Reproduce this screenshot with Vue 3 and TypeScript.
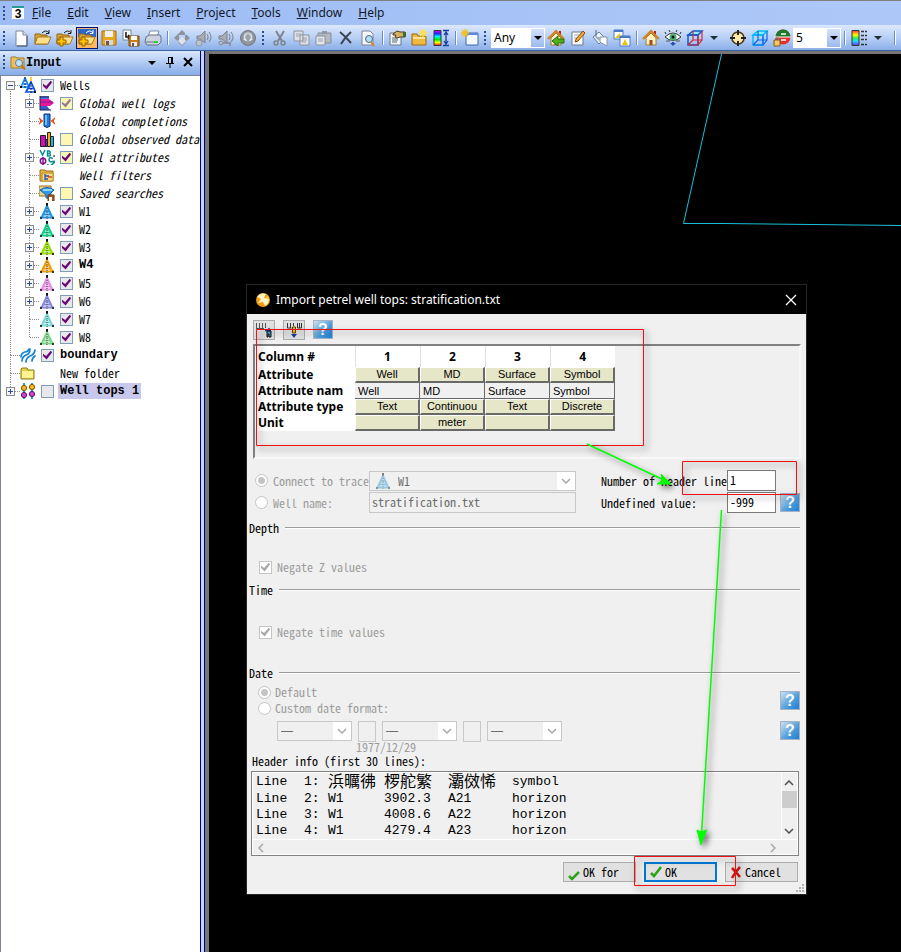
<script setup lang="ts">
import { ref } from 'vue'

interface ToolItem {
  kind: 'icon' | 'sep' | 'grip' | 'caret' | 'select'
  name?: string
  value?: string
  on?: boolean
}

interface TreeRow {
  label: string
  level: 0 | 1
  icon: string
  color?: string
  expander?: '+' | '-'
  last?: boolean
  check?: 'on' | 'off' | 'none'
  yellow?: boolean
  faded?: boolean
  italic?: boolean
  bold?: boolean
  selected?: boolean
}

const menus = ['File', 'Edit', 'View', 'Insert', 'Project', 'Tools', 'Window', 'Help']

const folder =
  '<path d="M1 5h5l1 1h6v9H1z" fill="#e0a030" stroke="#8a6418"/><path d="M3.500 8H17l-3 7H1z" fill="#ffe08a" stroke="#a87820"/>'
const importArrow = (color: string) => `<path d="M8 4q4-4 7 0M15 1v3.500h-3" fill="none" stroke="${color}"/>`
const plus = '<path d="M4 8h3v3h3v3H7v3H4v-3H1v-3h3z" fill="#ffc400" stroke="#9a6400"/>'
const floppy =
  '<path d="M2 2h14v14H2z" fill="#e8a81c" stroke="#a86c10"/><path d="M5 2h8v6H5z" fill="#eef2f8"/><path d="M5 11h8v5H5z" fill="#d8d8dc"/><path d="M6 12h3v4H6z" fill="#6c5a3c"/>'
const house =
  '<path d="M12 2h2v5h-2z" fill="#c02010"/><path d="M4 9l5-5 5 5v7H4z" fill="#fff3c0" stroke="#a07830"/><path d="M1 10l8-8 8 8" fill="none" stroke="#d08020" stroke-width="2"/><path d="M7.500 11h3v5h-3z" fill="#a04818"/>'
const cube = (a: string, b: string) =>
  `<path d="M2 6l5-4h9l-4 4z" fill="#8ef" stroke="${a}" stroke-width="1.500"/><path d="M2 6h10v10H2z" fill="none" stroke="${a}" stroke-width="1.500"/><path d="M12 16l4-5V2M7 2v9h9M2 16l5-5M2 16h10V6" fill="none" stroke="${b}" stroke-width="1.200"/>`
const speaker =
  '<path d="M2 7h3l5-5v12l-5-4H2z" fill="#a8adb5" stroke="#7b8089"/><path d="M12 5q2 3 0 6M14 3q4 5 0 10" fill="none" stroke="#888e98" stroke-width="1.200"/>'
const shades =
  '<defs><linearGradient id="rainbow" x2="0" y2="1"><stop offset="0" stop-color="#f0f"/><stop offset=".2" stop-color="#22f"/><stop offset=".4" stop-color="#0ef"/><stop offset=".6" stop-color="#0e0"/><stop offset=".8" stop-color="#ff0"/><stop offset="1" stop-color="#f00"/></linearGradient><linearGradient id="legend" x2="0" y2="1"><stop offset="0" stop-color="#f33"/><stop offset=".3" stop-color="#ff0"/><stop offset=".5" stop-color="#3e4"/><stop offset=".7" stop-color="#2df"/><stop offset="1" stop-color="#63d"/></linearGradient></defs>'

const toolIcons: Record<string, string> = {
  New: '<path d="M4 2h7l4 4v11H4z" fill="#fff" stroke="#7a869a"/><path d="M11 2v4h4" fill="#dde4ee" stroke="#7a869a"/><path d="M15 7v10H5" fill="none" stroke="#445068"/>',
  Open: folder + importArrow('#222'),
  'Import file': folder + importArrow('#222') + plus,
  'Import on selection': '<path d="M0 0h18v8H0z" fill="#2c68c8"/>' + folder + importArrow('#fff') + plus,
  Save: floppy,
  'Save as':
    '<path d="M1 1h8v10H1z" fill="#fff" stroke="#789"/><path d="M4 3v5h4M6 6l2 2-2 2" fill="none" stroke="#111" stroke-width="1.500"/><path d="M7 7h10v10H7z" fill="#c8801c" stroke="#7c4408"/><path d="M9 7h6v4H9z" fill="#fff"/><path d="M9 13h6v4H9z" fill="#eee"/><path d="M10 14h2v3h-2z" fill="#555"/>',
  Print:
    '<path d="M6 2h9l-2 6H4z" fill="#fff" stroke="#8090a8"/><path d="M2 8l3-2h11l1 2v5l-3 3H3l-2-3z" fill="#cdd4de" stroke="#66728a"/><path d="M2 13h12" stroke="#66728a"/><path d="M10 12h4v2h-4z" fill="#3c3"/>',
  Move: '<path d="M9 1l5 5H4zM1 9l5-5v9zM17 9l-5-5v9z" fill="#8d929b"/><path d="M9 17l4-4H5z" fill="#8d929b"/><path d="M9 8l4 4-4 4-4-4z" fill="#dde2ea"/>',
  'Play sound': speaker + '<circle cx="4" cy="14" r="3" fill="#bfc4cc" stroke="#92979f"/>',
  'Sound key': speaker + '<circle cx="4" cy="14" r="2" fill="none" stroke="#888"/><path d="M6 14h7v3" fill="none" stroke="#888" stroke-width="1.500"/>',
  Stop: '<circle cx="9" cy="9" r="7.500" fill="#8f949c" stroke="#737881"/><circle cx="9" cy="8" r="4.500" fill="#d8dce2"/><path d="M9 4l3 4-3 6-3-6z" fill="#9ca2ac"/><path d="M4 10h3v2zM14 10h-3v2z" fill="#eee"/>',
  Cut: '<path d="M5 2l6 10M13 2L7 12" stroke="#7e848e" stroke-width="2"/><circle cx="5" cy="14" r="2" fill="none" stroke="#7e848e" stroke-width="1.500"/><circle cx="12" cy="14" r="2" fill="none" stroke="#7e848e" stroke-width="1.500"/>',
  Copy: '<path d="M1 2h9v10H1zM7 6h9v10H7z" fill="#dfe3e9" stroke="#8b919b"/><path d="M3 5h5M3 7h3M9 9h5M9 11h5M9 13h4" stroke="#9aa0aa"/>',
  Paste:
    '<path d="M3 4h13v10H3z" fill="#b3b8c0" stroke="#868c96"/><path d="M7 2h5v3H7z" fill="#9298a2"/><path d="M1 7h9v9H1z" fill="#e2e5ea" stroke="#8b919b"/><path d="M3 10h5M3 12h5" stroke="#9aa0aa"/>',
  Delete: '<path d="M3 3q5 4 11 11M14 3Q8 8 4 15" fill="none" stroke="#3d4654" stroke-width="2"/>',
  Preview:
    '<path d="M3 2h8l3 3v11H3z" fill="#f4f6fa" stroke="#7a869a"/><circle cx="10" cy="10" r="3.500" fill="#aee0f6" stroke="#567"/><path d="M12 13l3 4" stroke="#d08a20" stroke-width="2"/>',
  Properties:
    '<path d="M2 4h11v12H2z" fill="#f2f4f8" stroke="#68788c"/><path d="M4 9h6M4 11h6M4 13h5" stroke="#567"/><path d="M5 5l4-3 3 1h5v5h-5L9 9 7 8l1-2H5z" fill="#d8b060" stroke="#4a3a18"/><path d="M15 3h3v5h-3z" fill="#3c6c34"/>',
  'New folder':
    '<path d="M2 5h5l1 2h8v9H2z" fill="#f0b83c" stroke="#96691c"/><path d="M3 8h12v2H3z" fill="#ffe49c"/><path d="M13 0v8M9 4h8M10 1l6 6M16 1l-6 6" stroke="#ffe14a" stroke-width="1.300"/>',
  'Color scale':
    shades +
    '<path d="M2 1.500h7v15H2z" fill="url(#rainbow)" stroke="#334"/><path d="M14 3v12M11 1.500h6M11 16.500h6M12 6l2-3 2 3M12 12l2 3 2-3" fill="none" stroke="#1a3fa0" stroke-width="1.300"/>',
  'New window':
    '<path d="M5 4h12v12H5z" fill="#f4f8ff" stroke="#3f66b0"/><path d="M5 4h12v2H5z" fill="#5b8ae0"/><path d="M4 0v8M0 4h8M1 1l6 6M7 1L1 7" stroke="#f4c01c" stroke-width="1.300"/>',
  'Home back': house + '<path d="M17 10h-6V7l-6 5 6 5v-3h6z" fill="#4fae1c" stroke="#24700c"/>',
  'Edit sheet':
    '<path d="M3 3h11v13H3z" fill="#fafcff" stroke="#6c7a90"/><path d="M5 6h5M5 9h4" stroke="#9ab"/><path d="M14 2l2 2-7 8-3 1 1-3z" fill="#f0a830" stroke="#8a4a10"/>',
  Fill: '<path d="M2 8l6-5 6 6-6 6z" fill="#eef3fa" stroke="#667c98"/><path d="M5 1v7" stroke="#567"/><path d="M9 8h7v9l-7-4z" fill="#fff" stroke="#8899aa"/><path d="M4 8h7l-3 4z" fill="#9cb0c8"/>',
  'Copy view':
    '<path d="M1 1h9v9H1z" fill="#fff" stroke="#4a78c8"/><path d="M1 1h9v2H1z" fill="#4a78c8"/><path d="M2 9h5V4z" fill="#e8c800"/><path d="M7 7h10v10H7z" fill="#fff" stroke="#4a78c8"/><path d="M7 7h10v2H7z" fill="#4a78c8"/><path d="M9 16h6l-3-6z" fill="#e8c800"/>',
  Home: house,
  'View all':
    '<path d="M1 8q8-8 16 0-8 7-16 0z" fill="#fff" stroke="#333"/><circle cx="9" cy="8" r="3.500" fill="#4cb070"/><circle cx="9" cy="8" r="1.500" fill="#111"/><path d="M2 5L1 3M6 3L5 1M12 3l1-2M16 5l1-2" stroke="#333"/><path d="M8 13v1H6l3 3 3-3h-2v-1z" fill="#2c4fb4"/><path d="M2 12h4M12 12h4" stroke="#555"/>',
  Cube: cube('#1658c8', '#d02838'),
  Target:
    '<circle cx="9" cy="9" r="6" fill="#ffe9a8" stroke="#4a3410" stroke-width="1.500"/><path d="M9 1v5M9 12v5M1 9h5M12 9h5" stroke="#222" stroke-width="2"/>',
  'Cyan cube': cube('#08b8ff', '#0868e8'),
  'Lock view':
    '<circle cx="10" cy="8" r="7.500" fill="#e83030"/><path d="M2.500 8a7.500 7.500 0 0115 0z" fill="#1c7a2c"/><path d="M1 8h17" stroke="#fff"/><path d="M8 5h5M8 11h5" stroke="#fff" stroke-width="1.500"/><path d="M1 11h6v6H1z" fill="#f4c860" stroke="#7a5a18"/><path d="M2.500 11V9h3v2" fill="none" stroke="#777"/>',
  Legend:
    '<path d="M2 1.500h7v15H2z" fill="url(#legend)" stroke="#334"/><path d="M11 2.500h6M11 6.500h6M11 10.500h6M11 15.500h6" stroke="#333" stroke-width="1.500" stroke-dasharray="3 1"/>',
}

const icon = (name: string, on = false): ToolItem => ({ kind: 'icon', name, on })
const sep: ToolItem = { kind: 'sep' }
const grip: ToolItem = { kind: 'grip' }
const tools: ToolItem[] = [
  grip,
  icon('New'), icon('Open'), icon('Import file'), icon('Import on selection', true), icon('Save'), icon('Save as'), icon('Print'),
  sep,
  icon('Move'), icon('Play sound'), icon('Sound key'), icon('Stop'),
  grip,
  icon('Cut'), icon('Copy'), icon('Paste'), icon('Delete'), icon('Preview'),
  sep,
  icon('Properties'), icon('New folder'), icon('Color scale'),
  sep,
  icon('New window'),
  grip,
  { kind: 'select', name: 'Domain', value: 'Any' },
  icon('Home back'), icon('Edit sheet'), icon('Fill'), icon('Copy view'),
  sep,
  icon('Home'), icon('View all'), icon('Cube'),
  { kind: 'caret', name: 'Cube options' },
  icon('Target'), icon('Cyan cube'), icon('Lock view'),
  { kind: 'select', name: 'Vertical scale', value: '5' },
  sep,
  icon('Legend'),
  { kind: 'caret', name: 'Legend options' },
  sep,
]

const rig =
  '<path d="M8 0v4" stroke="#111" stroke-width="2"/><path d="M8 3L2.500 15M8 3l5.500 12M6 8.500h4M4.500 11.500h7M1 14.500h14" fill="none" stroke="currentColor" stroke-width="2"/><path d="M8 5v11" stroke="#444" stroke-dasharray="1 1"/><path d="M1 15h2M13 15h2" stroke="#333" stroke-width="2"/>'

const treeIcons: Record<string, string> = {
  rig,
  wells:
    '<path d="M5 1L1 10h8zM2.500 7h5" fill="none" stroke="#0a8cf8" stroke-width="1.700"/><path d="M11 5L6 15h9.500zM8.500 11.500h5" fill="none" stroke="#0a50e8" stroke-width="1.700"/><path d="M11 0v4" stroke="#fc3" stroke-width="2"/><path d="M5 0v11M11 5v11" stroke="#123" stroke-dasharray="2 1"/><path d="M0 10h2M14 15h2" stroke="#111" stroke-width="2"/>',
  logs: '<path d="M1 1h9v3H1z" fill="#4c78e8"/><path d="M1 4h9l5 4-4 3H1z" fill="#e8189c"/><path d="M1 7h13" stroke="#7c1c9c"/><path d="M1 11h7l3 4H1z" fill="#3c58c8"/><path d="M1 1v14M1 2h9M1 15h11" stroke="#224"/>',
  completions:
    '<path d="M5 1h6v12q-3 3-6 0z" fill="#1e7ce8" stroke="#12306c"/><path d="M7 2v10" stroke="#8cd0ff" stroke-width="1.500"/><path d="M0 5l3 3-3 3M16 5l-3 3 3 3M1 8h3M15 8h-3" fill="none" stroke="#f04c10" stroke-width="1.500"/>',
  observed:
    '<path d="M1.500 4.500h5v11h-5z" fill="#d010b0" stroke="#222"/><path d="M6.500 8.500h3v7h-3z" fill="#5030c8" stroke="#222"/><path d="M8.500 1.500h3v14h-3z" fill="#f8a818" stroke="#222"/><path d="M11.500 5.500h3v10h-3z" fill="#18b8f0" stroke="#222"/>',
  attributes:
    '<path d="M1 1l2.500 5L6 1M8.500 2v5h2q2-1 0-2.500h-2 2q1.500-1.500 0-2.500z" fill="none" stroke="#0a8c94" stroke-width="1.500"/><circle cx="4" cy="12" r="2.700" fill="none" stroke="#7c1088" stroke-width="1.500"/><path d="M4 8v8" stroke="#7c1088" stroke-width="1.500"/><path d="M14 9.500q-4-2-4 1t4 2-1 3-4-.500" fill="none" stroke="#0a8c94" stroke-width="1.500"/><path d="M15 6v2" stroke="#111"/>',
  filters:
    '<path d="M1 3h5l1 1h7v10H1z" fill="#eeb840" stroke="#946c1c"/><path d="M3 6h11v8H3z" fill="#ffd978" stroke="#b48a30"/><path d="M6 7v6M6 9h4M6 12h3" stroke="#2050c8" stroke-width="1.300"/><path d="M9 10h4" stroke="#e04020" stroke-width="1.500"/>',
  searches:
    '<path d="M0 1h12v10H0z" fill="#f0d490" stroke="#94701c"/><path d="M1 5q7-5 14 0l-5 5v3H7v-3z" fill="#2c9ce8" stroke="#1460a0"/><path d="M4 5h9" stroke="#bce8ff" stroke-width="1.500"/><path d="M9 10h6v6H9z" fill="#a85c20" stroke="#6c3808"/><path d="M10 12h3v4h-3z" fill="#fff"/>',
  boundary:
    '<path d="M1 10q0-4 4-5 3 0 4-3M2 14q0-4 4-6 4-1 4-6M6 15q0-4 4-6 4-1 5-6M12 14q0-3 3-5" fill="none" stroke="#1484d0" stroke-width="1.700" stroke-linecap="round"/>',
  folder:
    '<path d="M1 4l1-1h5l1 2h6v9H1z" fill="#e4d048" stroke="#8c7c1c"/><path d="M2 6h11v7H2z" fill="#fff490"/>',
  tops: '<path d="M4 0v16M12 0v16" stroke="#18a8f0" stroke-width="2"/><circle cx="4" cy="5" r="2.600" fill="#f8b818" stroke="#7c5400"/><circle cx="12" cy="4" r="2.600" fill="#f8b818" stroke="#7c5400"/><circle cx="4" cy="12" r="2.600" fill="#d040d8" stroke="#601068"/><circle cx="12" cy="11" r="2.600" fill="#d040d8" stroke="#601068"/>',
}

const well = (label: string, color: string, extra: Partial<TreeRow> = {}): TreeRow => ({
  label, level: 1, icon: 'rig', color, expander: '+', check: 'on', ...extra,
})
const tree: TreeRow[] = [
  { label: 'Wells', level: 0, icon: 'wells', expander: '-', check: 'on' },
  { label: 'Global well logs', level: 1, icon: 'logs', expander: '+', check: 'on', yellow: true, faded: true, italic: true },
  { label: 'Global completions', level: 1, icon: 'completions', check: 'none', italic: true },
  { label: 'Global observed data', level: 1, icon: 'observed', check: 'off', yellow: true, italic: true },
  { label: 'Well attributes', level: 1, icon: 'attributes', expander: '+', check: 'on', yellow: true, italic: true },
  { label: 'Well filters', level: 1, icon: 'filters', check: 'none', italic: true },
  { label: 'Saved searches', level: 1, icon: 'searches', check: 'off', yellow: true, italic: true },
  well('W1', '#1c94e0'),
  well('W2', '#10d088'),
  well('W3', '#94dc00'),
  well('W4', '#f09c08', { bold: true }),
  well('W5', '#e48ce4'),
  well('W6', '#8888e0'),
  well('W7', '#78d8d8', { expander: undefined }),
  well('W8', '#7cd488', { expander: undefined, last: true }),
  { label: 'boundary', level: 0, icon: 'boundary', check: 'on', bold: true },
  { label: 'New folder', level: 0, icon: 'folder', check: 'none' },
  { label: 'Well tops 1', level: 0, icon: 'tops', expander: '+', check: 'off', bold: true, selected: true, last: true },
]

const columns = ref([
  { attribute: 'Well', name: 'Well', type: 'Text', unit: '' },
  { attribute: 'MD', name: 'MD', type: 'Continuou', unit: 'meter' },
  { attribute: 'Surface', name: 'Surface', type: 'Text', unit: '' },
  { attribute: 'Symbol', name: 'Symbol', type: 'Discrete', unit: '' },
])

const lines = [
  ['1:', '浜曞彿', '椤舵繁', '灞傚悕', 'symbol'],
  ['2:', 'W1', '3902.3', 'A21', 'horizon'],
  ['3:', 'W1', '4008.6', 'A22', 'horizon'],
  ['4:', 'W1', '4279.4', 'A23', 'horizon'],
]
const isHan = (s: string) => /[\u4e00-\u9fff]/.test(s)

const headerLines = ref('1')
const undefinedValue = ref('-999')
const wellName = ref('stratification.txt')
</script>

<template>
  <div class="app">
    <nav class="menubar">
      <i class="grip"></i>
      <svg class="doc" viewBox="0 0 16 16" width="16" height="16" aria-hidden="true">
        <path d="M2 1h12v2H2z" fill="#2b9a9a" />
        <path d="M2 3h12v11H2z" fill="#fff" />
        <text x="8" y="13" text-anchor="middle" class="doc-num">3</text>
      </svg>
      <a v-for="m in menus" :key="m" href="#" class="menu"><u>{{ m[0] }}</u>{{ m.slice(1) }}</a>
    </nav>

    <div class="toolbar">
      <template v-for="(t, i) in tools" :key="i">
        <i v-if="t.kind === 'grip'" class="grip"></i>
        <i v-else-if="t.kind === 'sep'" class="sep"></i>
        <button v-else-if="t.kind === 'icon'" type="button" class="tool" :class="{ on: t.on }" :aria-label="t.name">
          <svg viewBox="0 0 18 18" width="18" height="18" v-html="toolIcons[t.name!]"></svg>
        </button>
        <button v-else-if="t.kind === 'caret'" type="button" class="tool caret" :aria-label="t.name">
          <svg viewBox="0 0 8 4" width="8" height="4"><path d="M0 0h8L4 4z" fill="#222c3c" /></svg>
        </button>
        <div v-else class="tool-select" :class="{ narrow: t.value === '5' }">
          <select :aria-label="t.name"><option>{{ t.value }}</option></select>
          <span class="drop"><svg viewBox="0 0 8 4" width="8" height="4"><path d="M0 0h8L4 4z" fill="#000" /></svg></span>
        </div>
      </template>
    </div>

    <div class="work">
      <aside class="panel">
        <header class="panel-head">
          <i class="grip"></i>
          <svg viewBox="0 0 16 16" width="16" height="16" aria-hidden="true">
            <path d="M1 3h5l1 1h7v10H1z" fill="#eec060" stroke="#a07c28" />
            <circle cx="9" cy="9" r="3.500" fill="#bfe4fa" stroke="#557c9c" />
            <path d="M11.500 11.500l3.500 4" stroke="#c07820" stroke-width="2" />
          </svg>
          <h2>Input</h2>
          <button type="button" aria-label="Panel menu">
            <svg viewBox="0 0 12 12" width="12" height="12"><path d="M2 5h8l-4 4z" /></svg>
          </button>
          <button type="button" aria-label="Pin panel">
            <svg viewBox="0 0 12 12" width="12" height="12">
              <path d="M4 1.500h5M4.500 1v6M2 7.500h8M6 7v5" fill="none" stroke="#000" /><path d="M7 1h2v6H7z" />
            </svg>
          </button>
          <button type="button" aria-label="Close panel">
            <svg viewBox="0 0 12 12" width="12" height="12"><path d="M2 2l8 8M10 2l-8 8" stroke="#000" stroke-width="2" /></svg>
          </button>
        </header>
        <ul class="tree">
          <li v-for="(r, i) in tree" :key="r.label">
            <svg v-if="r.level === 1" viewBox="0 0 19 18" width="19" height="18" aria-hidden="true">
              <path d="M10.500 0v18" class="dots" />
            </svg>
            <component
              :is="r.expander ? 'button' : 'span'"
              class="branch"
              :type="r.expander ? 'button' : undefined"
              :aria-label="r.expander ? 'Toggle ' + r.label : undefined"
            >
              <svg viewBox="0 0 20 18" width="20" height="18">
                <path v-if="i > 0" d="M10.500 0v9" class="dots" />
                <path v-if="!r.last" d="M10.500 9v9" class="dots" />
                <path d="M11 9.500h9" class="dots" />
                <template v-if="r.expander">
                  <rect x="6.500" y="5.500" width="8" height="8" fill="#f4f4f4" stroke="#8c8c8c" />
                  <path :d="r.expander === '+' ? 'M8 9.500h5M10.500 7v5' : 'M8 9.500h5'" stroke="#2c4c94" />
                </template>
              </svg>
            </component>
            <svg viewBox="0 0 16 16" width="16" height="16" :color="r.color" v-html="treeIcons[r.icon]"></svg>
            <label :class="{ italic: r.italic, bold: r.bold }">
              <span v-if="r.check === 'none'" class="blank"></span>
              <input v-else type="checkbox" :checked="r.check === 'on'" :class="{ yellow: r.yellow, faded: r.faded }" />
              <span class="name" :class="{ selected: r.selected }">{{ r.label }}</span>
            </label>
          </li>
        </ul>
      </aside>

      <main class="viewport">
        <svg class="outline" viewBox="0 0 692 300" width="692" height="300" aria-hidden="true">
          <path d="M512.500 0L474.500 169.500L514 169.500L692 171.500" fill="none" stroke="#18c0dc" />
        </svg>

        <section class="dialog" role="dialog" aria-labelledby="dlg-title">
          <header class="titlebar">
            <svg viewBox="0 0 16 16" width="16" height="16" aria-hidden="true">
              <circle cx="8" cy="8" r="7" fill="#f49a10" />
              <path d="M2 5q4-5 9-3L9 6l5 1q0 5-4 7L8 10l-5 1q2-3 3-4z" fill="#fff4c4" />
              <path d="M12 4q2 1 2 3l-3-1z" fill="#fbd04c" />
            </svg>
            <h1 id="dlg-title">Import petrel well tops: stratification.txt</h1>
            <button type="button" aria-label="Close">
              <svg viewBox="0 0 12 12" width="12" height="12"><path d="M1 1l10 10M11 1L1 11" stroke="#fff" stroke-width="1.300" /></svg>
            </button>
          </header>

          <div class="content">
            <div class="mini-tools">
              <button type="button" aria-label="Append column">
                <svg viewBox="0 0 18 16" width="18" height="16">
                  <path d="M1.500 1v5M4.500 1v5M7.500 1v5M10.500 1v5M1 6.500h8" fill="none" stroke="#555" />
                  <path d="M10 8.500h6M14 6v3" stroke="#1c3c9c" stroke-width="1.500" /><path d="M12 9h4v6h-2v-3h-1v3h-1z" fill="#39a8c8" stroke="#111" />
                </svg>
              </button>
              <button type="button" aria-label="Insert column">
                <svg viewBox="0 0 18 16" width="18" height="16">
                  <path d="M2.500 1v5h4M5.500 1v5M8.500 1v3M12.500 1v5h4M14.500 1v5M16.500 1v5" fill="none" stroke="#333" />
                  <path d="M7.500 5h3v6h-3z" fill="#f8c030" stroke="#664400" /><path d="M6 12h6l-3 4z" fill="#203c9c" />
                </svg>
              </button>
              <button type="button" class="help" aria-label="Help">?</button>
            </div>

            <div class="sheet">
              <table>
                <thead>
                  <tr>
                    <th scope="col">Column #</th>
                    <th v-for="(c, i) in columns" :key="i" scope="col" class="num">{{ i + 1 }}</th>
                  </tr>
                </thead>
                <tbody>
                  <tr>
                    <th scope="row">Attribute</th>
                    <td v-for="(c, i) in columns" :key="i"><button type="button">{{ c.attribute }}</button></td>
                  </tr>
                  <tr>
                    <th scope="row">Attribute nam</th>
                    <td v-for="(c, i) in columns" :key="i">
                      <input v-model="c.name" type="text" :aria-label="'Attribute name ' + (i + 1)" />
                    </td>
                  </tr>
                  <tr>
                    <th scope="row">Attribute type</th>
                    <td v-for="(c, i) in columns" :key="i"><button type="button">{{ c.type }}</button></td>
                  </tr>
                  <tr>
                    <th scope="row">Unit</th>
                    <td v-for="(c, i) in columns" :key="i">
                      <button type="button" :aria-label="'Unit ' + (i + 1)">{{ c.unit }}</button>
                    </td>
                  </tr>
                </tbody>
              </table>
            </div>

            <div class="fields">
              <label class="choice"><input type="radio" name="source" checked disabled />Connect to trace</label>
              <div class="combo wide">
                <select aria-label="Trace" disabled><option>W1</option></select>
                <svg class="trace" viewBox="0 0 16 16" width="16" height="16" color="#3aa4d8" aria-hidden="true" v-html="rig"></svg>
                <span class="chev"><svg viewBox="0 0 10 6" width="10" height="6"><path d="M1 1l4 4 4-4" /></svg></span>
              </div>
              <label class="caption" for="hdr">Number of header line</label>
              <input id="hdr" v-model="headerLines" class="box" type="text" />
              <span></span>

              <label class="choice"><input type="radio" name="source" disabled />Well name:</label>
              <input v-model="wellName" class="box off" type="text" aria-label="Well name" disabled />
              <label class="caption" for="undef">Undefined value:</label>
              <input id="undef" v-model="undefinedValue" class="box" type="text" />
              <button type="button" class="help" aria-label="Help">?</button>
            </div>

            <section class="group depth">
              <h3>Depth</h3>
              <label class="tick"><input type="checkbox" checked disabled />Negate Z values</label>
            </section>
            <section class="group time">
              <h3>Time</h3>
              <label class="tick"><input type="checkbox" checked disabled />Negate time values</label>
            </section>
            <section class="group date">
              <h3>Date</h3>
              <div class="date-row">
                <div class="modes">
                  <label class="choice"><input type="radio" name="date" checked disabled />Default</label>
                  <label class="choice"><input type="radio" name="date" disabled />Custom date format:</label>
                </div>
                <button type="button" class="help" aria-label="Help">?</button>
              </div>
              <div class="date-row formats">
                <template v-for="n in 3" :key="n">
                  <div class="combo">
                    <select :aria-label="'Date part ' + n" disabled><option>—</option></select>
                    <span class="chev"><svg viewBox="0 0 10 6" width="10" height="6"><path d="M1 1l4 4 4-4" /></svg></span>
                  </div>
                  <input v-if="n < 3" class="box off tiny" type="text" :aria-label="'Separator ' + n" disabled />
                </template>
                <button type="button" class="help" aria-label="Help">?</button>
              </div>
              <p class="sample">1977/12/29</p>
            </section>

            <h4>Header info (first 30 lines):</h4>
            <div class="listing">
              <div class="rows">
                <p v-for="l in lines" :key="l[0]"><span>Line</span><span v-for="c in l" :key="c" :class="{ han: isHan(c) }">{{ c }}</span></p>
              </div>
              <div class="vbar">
                <svg viewBox="0 0 10 6" width="10" height="6"><path d="M1 5l4-4 4 4" /></svg>
                <i></i>
                <svg viewBox="0 0 10 6" width="10" height="6"><path d="M1 1l4 4 4-4" /></svg>
              </div>
              <div class="hbar">
                <svg viewBox="0 0 6 10" width="6" height="10"><path d="M5 1L1 5l4 4" /></svg>
                <svg viewBox="0 0 6 10" width="6" height="10"><path d="M1 1l4 4-4 4" /></svg>
              </div>
            </div>

            <footer class="actions">
              <button type="button">
                <svg viewBox="0 0 14 14" width="14" height="14" class="low"><path d="M2 9l3 3 7-7" fill="none" stroke="#2fa01c" stroke-width="2.500" /></svg>OK for
              </button>
              <button type="button" class="primary">
                <svg viewBox="0 0 14 14" width="14" height="14"><path d="M2 8l3 3 7-9" fill="none" stroke="#2fa01c" stroke-width="2.500" /></svg>OK
              </button>
              <button type="button">
                <svg viewBox="0 0 14 14" width="14" height="14"><path d="M3 3q4 4 8 9M11 2Q7 6 3 13" fill="none" stroke="#d01414" stroke-width="2.500" /></svg>Cancel
              </button>
            </footer>
          </div>
          <svg class="resize" viewBox="0 0 9 9" width="9" height="9" aria-hidden="true">
            <path d="M6 0h2v2H6zM3 3h2v2H3zM6 3h2v2H6zM0 6h2v2H0zM3 6h2v2H3zM6 6h2v2H6z" fill="#b4b4b4" />
          </svg>

          <svg class="notes" viewBox="0 0 560 611" width="560" height="611" aria-hidden="true">
            <g fill="none" stroke="#ee1111">
              <path d="M9.500 45.500h387v116H9.500z" />
              <path d="M435.500 177.500h114v33h-114z" />
              <path d="M387.500 572.500h101v29h-101z" />
            </g>
            <g stroke="#0f0" fill="#0f0">
              <path d="M340 160L417 196" stroke-width="1.500" />
              <path d="M424 200L414 190l2 6-6 4z" />
              <path d="M474.500 226L454.500 550" stroke-width="1.500" />
              <path d="M454 561l-4-15 4.500 2 5-2z" />
            </g>
          </svg>
        </section>
      </main>
    </div>
  </div>
</template>

<style>
body {
  background: #000;
}
</style>

<style scoped>
.app,
.app * {
  box-sizing: border-box;
}
.app {
  --song: 'Noto Sans CJK SC', 'Liberation Mono', monospace;
  --ui: 'Noto Sans', 'Open Sans', sans-serif;
  display: flex;
  flex-direction: column;
  min-height: 100vh;
  overflow: hidden;
  border-top: 1px solid #808080;
  background: #000;
  color: #000;
  font: 12px/16px var(--song);
  font-feature-settings: 'hwid', 'liga' 0;
}
h1, h2, h3, h4, p, ul {
  margin: 0;
  padding: 0;
  font-size: inherit;
  font-weight: normal;
}
button, input, select {
  margin: 0;
  padding: 0;
  border: 0;
  border-radius: 0;
  background: none;
  color: inherit;
  font: inherit;
  font-feature-settings: inherit;
}
select, input {
  appearance: none;
  min-width: 0;
}
svg {
  display: block;
  flex: none;
}

.grip {
  flex: none;
  width: 10px;
  height: 16px;
  background: repeating-linear-gradient(#2b4d94 0 2px, transparent 2px 4px) 3px 1px / 2px 14px no-repeat;
}
.menubar {
  display: flex;
  align-items: center;
  height: 24px;
  background: linear-gradient(90deg, #9dbcf4, #adc8f8);
  font: 12px/18px var(--ui);
}
.doc {
  margin-right: 6px;
}
.doc-num {
  font: bold 12px 'Liberation Sans', sans-serif;
}
.menu {
  margin-right: 16px;
  color: #101828;
  text-decoration: none;
}
.toolbar {
  display: flex;
  align-items: center;
  height: 26px;
  border-bottom: 1px solid #38609f;
  background: linear-gradient(#dce8fc, #b8d0f6 50%, #8aaee8);
}
.tool {
  display: grid;
  place-items: center;
  flex: none;
  width: 22px;
  height: 22px;
}
.tool.on {
  border: 1px solid #00127c;
  background: #ffb860;
}
.tool.caret {
  width: 16px;
  margin-right: 5px;
}
.sep {
  flex: none;
  width: 7px;
  height: 14px;
  background: linear-gradient(90deg, #6a8ccc 1px, #fff 1px) 3px 0 / 2px 14px no-repeat;
}
.tool-select {
  display: grid;
  flex: none;
  width: 54px;
  height: 20px;
  border: 1px solid #fff;
  background: #fff;
  font: 12px/18px var(--ui);
}
.tool-select.narrow {
  width: 48px;
}
.tool-select > * {
  grid-area: 1 / 1;
}
.tool-select select {
  padding-left: 2px;
}
.drop {
  display: grid;
  place-items: center;
  justify-self: end;
  width: 13px;
  background: linear-gradient(#d4e2fa, #9ab8ee);
  pointer-events: none;
}

.work {
  display: flex;
  flex: 1;
}
.panel {
  display: flex;
  flex: none;
  flex-direction: column;
  width: 209px;
  padding-right: 5px;
  border-right: 4px solid #767676;
  background:
    linear-gradient(90deg, #00007c 1px, #c4d4fa 1px 4px, #00007c 4px) right / 5px 100% no-repeat,
    #8cb0ea;
}
.panel-head {
  display: flex;
  align-items: center;
  height: 22px;
  background: linear-gradient(#dce8fc, #8cb0ea);
}
.panel-head h2 {
  flex: 1;
  padding-top: 2px;
  font: bold 12px/16px 'Liberation Mono', monospace;
}
.panel-head button {
  display: grid;
  place-items: center;
  width: 18px;
  height: 18px;
}
.panel-head button:last-child {
  margin-right: 3px;
}
.tree {
  flex: 1;
  margin-top: 2px;
  border: solid #7c8494;
  border-width: 1px 0 0 1px;
  background: #fff;
  list-style: none;
  overflow: hidden;
}
.tree li {
  display: flex;
  align-items: center;
  height: 18px;
  margin-left: -1px;
}
.branch {
  flex: none;
  width: 20px;
  height: 18px;
}
.dots {
  fill: none;
  stroke: #909090;
  stroke-dasharray: 1 1;
}
.tree label {
  display: flex;
  align-items: center;
  min-width: 0;
  margin-left: 5px;
  line-height: 18px;
  white-space: nowrap;
}
.blank {
  width: 13px;
  margin-right: 4px;
}
.tree input {
  flex: none;
  width: 13px;
  height: 13px;
  margin-right: 4px;
  border: 1px solid #7f9db9;
  background: #e8e8ea;
}
.tree input.yellow {
  background: #fcf8b4;
}
.tree input:checked::before,
.tick input::before {
  content: '';
  display: block;
  width: 9px;
  height: 9px;
  margin: 1px;
  background: #6c0878;
  clip-path: polygon(0 35%, 35% 62%, 88% 0, 100% 22%, 40% 100%, 0 62%);
}
.tree input.faded::before {
  background: #9c7890;
}
.name {
  padding: 0 2px;
}
.italic {
  font-style: italic;
}
.tree label.bold {
  font: bold 12px/16px 'Liberation Mono', monospace;
}
.selected {
  background: #c8c8ec;
}

.viewport {
  position: relative;
  flex: 1;
  min-width: 0;
  border-top: 3px solid #767676;
  background: #000;
}
.outline {
  position: absolute;
  top: 0;
  left: 0;
}
.dialog {
  position: absolute;
  top: 230px;
  left: 37px;
  width: 561px;
  border: 1px solid #262626;
  background: #f0f0f0;
}
.titlebar {
  display: flex;
  align-items: center;
  gap: 5px;
  height: 29px;
  padding: 0 9px 0 8px;
  background: #000;
  color: #fff;
  font: 12px/16px var(--ui);
}
.titlebar h1 {
  flex: 1;
}
.content {
  padding: 6px 5px 12px 6px;
}
.mini-tools {
  display: flex;
  gap: 8px;
  height: 24px;
}
.mini-tools button:not(.help) {
  display: grid;
  place-items: center;
  width: 22px;
  height: 20px;
  border: 1px solid #adadad;
  background: #e1e1e1;
}
.help {
  flex: none;
  width: 20px;
  height: 19px;
  border: 1px solid #a4b4c4;
  background: linear-gradient(135deg, #cfe0ee, #4c9cdc 60%, #1c80d8);
  color: #fff;
  font: bold 16px/16px 'Liberation Sans', sans-serif;
  text-align: center;
}
.sheet {
  height: 115px;
  border: 2px solid;
  border-color: #808080 #f8f8f8 #f8f8f8 #808080;
}
table {
  border-collapse: collapse;
  table-layout: fixed;
  font: 11px/14px 'Liberation Sans', sans-serif;
}
th {
  width: 100px;
  height: 16px;
  padding: 0 0 0 3px;
  background: #fff;
  font: bold 12px/16px var(--ui);
  text-align: left;
  white-space: nowrap;
}
thead th {
  height: 21px;
}
.num {
  width: 65px;
  padding: 0;
  border-left: 1px solid #e0e0e0;
  text-align: center;
}
td {
  width: 65px;
  height: 16px;
  padding: 0;
}
td button,
td input {
  display: block;
  width: 65px;
  height: 16px;
}
td button {
  border: solid;
  border-width: 1px 2px 2px 1px;
  border-color: #fff #696969 #696969 #fff;
  background: #e6e6c8;
  line-height: 13px;
}
td input {
  padding-left: 3px;
  border-right: 1px solid #696969;
  border-bottom: 1px solid #696969;
}

.fields {
  display: grid;
  grid-template-columns: 116px 207px 1fr 49px 24px;
  row-gap: 1px;
  align-items: center;
  margin-top: 11px;
  padding-right: 1px;
}
.fields .help {
  margin-left: 4px;
}
.choice,
.tick {
  display: flex;
  align-items: center;
  color: #9c9c9c;
  white-space: nowrap;
}
.choice input {
  flex: none;
  width: 13px;
  height: 13px;
  margin: 0 5px 0 2px;
  border: 1px solid #c4c4c4;
  border-radius: 50%;
  background: #fff;
}
.choice input:checked {
  background: radial-gradient(#c4c4c4 3px, #fff 4px);
}
.caption {
  padding-left: 25px;
  white-space: nowrap;
}
.box {
  width: 100%;
  height: 21px;
  padding: 0 2px 2px;
  border: 1px solid #7a7a7a;
  background: #fff;
}
.box.off {
  border-color: #c8c8c8;
  background: #f0f0f0;
  color: #6d6d6d;
}
.combo {
  display: grid;
  flex: none;
  width: 75px;
  height: 20px;
  border: 1px solid #c8c8c8;
  background: #f0f0f0;
  color: #6d6d6d;
}
.combo > * {
  grid-area: 1 / 1;
}
.combo select {
  padding: 0 18px 0 3px;
  opacity: 1;
}
.combo.wide {
  width: 100%;
}
.combo.wide select {
  padding-left: 28px;
}
.trace {
  align-self: center;
  margin-left: 5px;
  opacity: 0.5;
}
.chev {
  display: grid;
  place-items: center;
  justify-self: end;
  width: 18px;
  background: #fff;
  pointer-events: none;
}
.chev path,
.vbar path,
.hbar path {
  fill: none;
  stroke: #a8a8a8;
  stroke-width: 1.5;
}
.group h3 {
  display: flex;
  align-items: center;
  gap: 6px;
  margin-left: -4px;
  padding-right: 1px;
}
.group h3::after {
  content: '';
  flex: 1;
  border-top: 1px solid #9c9c9c;
  border-bottom: 1px solid #fff;
}
.depth {
  height: 62px;
  margin-top: 7px;
}
.time {
  height: 83px;
}
.tick {
  margin: 23px 0 0 6px;
}
.time .tick {
  margin-top: 26px;
}
.tick input {
  flex: none;
  width: 13px;
  height: 13px;
  margin-right: 5px;
  border: 1px solid #c4c4c4;
  background: #fff;
}
.tick input::before {
  background: #a8a8a8;
}
.date-row {
  display: flex;
  justify-content: space-between;
}
.date .choice {
  padding-left: 3px;
}
.date .choice input {
  margin-right: 4px;
}
.modes {
  padding-top: 3px;
}
.date-row .help {
  margin: 10px 1px 0 auto;
}
.formats {
  align-items: flex-start;
  justify-content: flex-start;
  gap: 6px;
  height: 20px;
  margin-top: 5px;
  padding-left: 24px;
}
.formats .combo select {
  font: 12px/16px 'Liberation Sans', sans-serif;
  font-feature-settings: normal;
}
.formats .help {
  margin-top: 0;
}
.tiny {
  width: 18px;
}
.sample {
  margin-left: 103px;
  color: #9c9c9c;
  line-height: 12px;
}
h4 {
  margin-left: -1px;
  line-height: 16px;
}
.listing {
  display: grid;
  grid-template: 67px 16px / 1fr 17px;
  margin: 2px 2px 0 -2px;
  border: 1px solid #828282;
  outline: 1px solid #fff;
  outline-offset: -2px;
}
.rows {
  padding: 2px 0 0 4px;
  font: 13px/16px 'Liberation Mono', 'Noto Sans CJK SC', monospace;
  font-feature-settings: normal;
}
.rows p {
  display: grid;
  grid-template-columns: 48px 24px 56px 64px 64px 1fr;
  height: 16px;
  white-space: nowrap;
}
.rows p:first-child {
  height: 17px;
}
.rows .han {
  font: 16px/12px 'Noto Sans CJK SC', sans-serif;
}
.vbar {
  display: flex;
  flex-direction: column;
  align-items: center;
  padding: 8px 2px 5px 0;
  border-left: 1px solid #fff;
}
.vbar i {
  width: 15px;
  height: 17px;
  margin: 5px 0 auto;
  background: #cdcdcd;
}
.vbar path {
  stroke: #505050;
}
.hbar {
  display: flex;
  align-items: center;
  justify-content: space-between;
  grid-column: 1 / 3;
  padding: 0 22px 0 6px;
  border-top: 1px solid #fff;
}
.actions {
  display: flex;
  justify-content: flex-end;
  gap: 8px;
  margin-top: 6px;
  padding-right: 3px;
}
.actions button {
  display: flex;
  align-items: center;
  gap: 2px;
  width: 73px;
  height: 20px;
  padding-left: 3px;
  border: 1px solid #adadad;
  background: #e1e1e1;
}
.actions .primary {
  border: 2px solid #0078d7;
}
.low {
  align-self: flex-end;
}
.resize {
  position: absolute;
  right: 1px;
  bottom: 1px;
}
.notes {
  position: absolute;
  top: -1px;
  left: 0;
  pointer-events: none;
}
.notes g {
  filter: drop-shadow(3px 3px 3px rgba(0, 0, 0, 0.6));
}
</style>
